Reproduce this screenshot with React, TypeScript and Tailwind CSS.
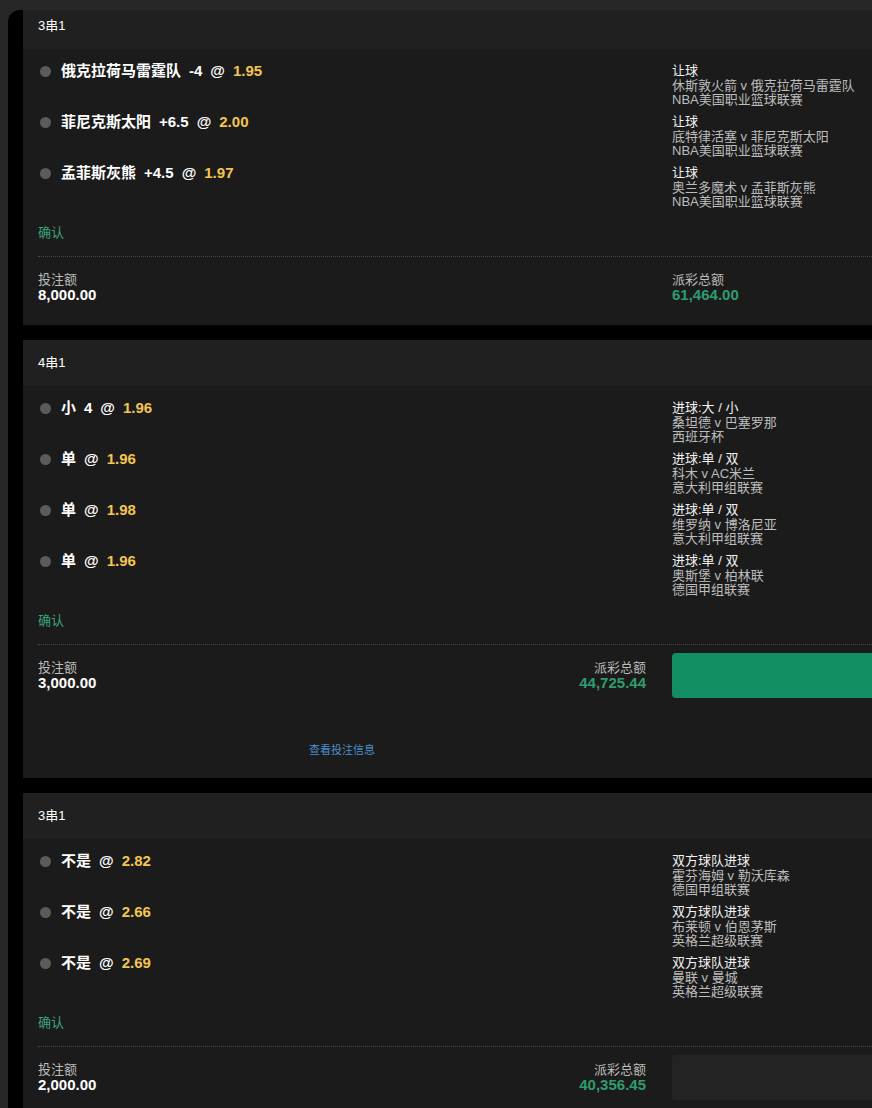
type Leg = {
  pick: string;
  line?: string;
  odds: string;
  market: string;
  match: string;
  league: string;
};

type Slip = {
  title: string;
  legs: Leg[];
  stake: string;
  payout: string;
  button?: "cashout" | "disabled";
  link?: boolean;
  cut?: boolean;
};

const slips: Slip[] = [
  {
    title: "3串1",
    cut: true,
    stake: "8,000.00",
    payout: "61,464.00",
    legs: [
      { pick: "俄克拉荷马雷霆队", line: "-4", odds: "1.95", market: "让球", match: "休斯敦火箭 v 俄克拉荷马雷霆队", league: "NBA美国职业篮球联赛" },
      { pick: "菲尼克斯太阳", line: "+6.5", odds: "2.00", market: "让球", match: "底特律活塞 v 菲尼克斯太阳", league: "NBA美国职业篮球联赛" },
      { pick: "孟菲斯灰熊", line: "+4.5", odds: "1.97", market: "让球", match: "奥兰多魔术 v 孟菲斯灰熊", league: "NBA美国职业篮球联赛" },
    ],
  },
  {
    title: "4串1",
    stake: "3,000.00",
    payout: "44,725.44",
    button: "cashout",
    link: true,
    legs: [
      { pick: "小", line: "4", odds: "1.96", market: "进球:大 / 小", match: "桑坦德 v 巴塞罗那", league: "西班牙杯" },
      { pick: "单", odds: "1.96", market: "进球:单 / 双", match: "科木 v AC米兰", league: "意大利甲组联赛" },
      { pick: "单", odds: "1.98", market: "进球:单 / 双", match: "维罗纳 v 博洛尼亚", league: "意大利甲组联赛" },
      { pick: "单", odds: "1.96", market: "进球:单 / 双", match: "奥斯堡 v 柏林联", league: "德国甲组联赛" },
    ],
  },
  {
    title: "3串1",
    stake: "2,000.00",
    payout: "40,356.45",
    button: "disabled",
    legs: [
      { pick: "不是", odds: "2.82", market: "双方球队进球", match: "霍芬海姆 v 勒沃库森", league: "德国甲组联赛" },
      { pick: "不是", odds: "2.66", market: "双方球队进球", match: "布莱顿 v 伯恩茅斯", league: "英格兰超级联赛" },
      { pick: "不是", odds: "2.69", market: "双方球队进球", match: "曼联 v 曼城", league: "英格兰超级联赛" },
    ],
  },
];

function LegRow({ leg }: { leg: Leg }) {
  return (
    <>
      <div className="flex items-center gap-[10px] pl-[2px] h-[14.5px]">
        <span className="w-[11px] h-[11px] rounded-full bg-[#5b5b5b] shrink-0" />
        <span className="flex items-center gap-[8px] text-[15px] font-bold leading-[14.5px] text-white">
          <span>{leg.pick}</span>
          {leg.line && <span>{leg.line}</span>}
          <span>@</span>
          <span className="text-[#f3c553]">{leg.odds}</span>
        </span>
      </div>
      <div className="text-[13px] leading-[14.5px]">
        <div className="text-[#f2f2f2]">{leg.market}</div>
        <div className="text-[#bdbdbd]">{leg.match}</div>
        <div className="text-[#bdbdbd]">{leg.league}</div>
      </div>
    </>
  );
}

function SlipCard({ slip }: { slip: Slip }) {
  const split = !!slip.button;
  return (
    <div className={`bg-[#1b1b1b] ${slip.cut ? "-mt-[7px]" : ""}`}>
      <div className="h-[46px] flex items-center pl-[15px] bg-[#202020] text-[13px] text-white">
        {slip.title}
      </div>

      <div className="pl-[15px] pt-[15px] pb-[15px]">
        <div className="grid grid-cols-[608px_300px] gap-x-[26px] gap-y-[7.5px]">
          {slip.legs.map((leg, i) => (
            <LegRow key={i} leg={leg} />
          ))}
        </div>

        <div className="mt-[15px] text-[13px] leading-[15px] text-[#3ca37a]">确认</div>

        <div className="mt-[16.5px] border-t border-dotted border-[#474747]" />

        <div className="pt-[7.5px] grid grid-cols-[608px_300px] gap-x-[26px] items-center">
          <div className="h-[45px] flex items-center justify-between">
            <div>
              <div className="text-[13px] leading-[15px] text-[#bdbdbd]">投注额</div>
              <div className="text-[15px] leading-[15px] font-bold text-white">{slip.stake}</div>
            </div>
            {split && (
              <div className="text-right">
                <div className="text-[13px] leading-[15px] text-[#bdbdbd]">派彩总额</div>
                <div className="text-[15px] leading-[15px] font-bold text-[#2f9c6f]">{slip.payout}</div>
              </div>
            )}
          </div>
          {split ? (
            <div
              className={`h-[45px] rounded-[4px] ${
                slip.button === "cashout" ? "bg-[#128f62]" : "bg-[#232323]"
              }`}
            />
          ) : (
            <div>
              <div className="text-[13px] leading-[15px] text-[#bdbdbd]">派彩总额</div>
              <div className="text-[15px] leading-[15px] font-bold text-[#2f9c6f]">{slip.payout}</div>
            </div>
          )}
        </div>

        {slip.link && (
          <div className="w-[608px] mt-[45px] mb-[6px] text-center text-[11px] leading-[14px] text-[#4a8fcc]">
            查看投注信息
          </div>
        )}
      </div>
    </div>
  );
}

export default function App() {
  return (
    <div className="h-[1108px] w-full overflow-hidden bg-[#272727] pt-[10px] pl-[8px] font-['Liberation_Sans','Noto_Sans_CJK_SC',sans-serif]">
      <div className="w-[1100px] h-full bg-black rounded-tl-[12px] overflow-hidden pl-[15px] flex flex-col gap-[15.5px]">
        {slips.map((s, i) => (
          <SlipCard key={i} slip={s} />
        ))}
      </div>
    </div>
  );
}
